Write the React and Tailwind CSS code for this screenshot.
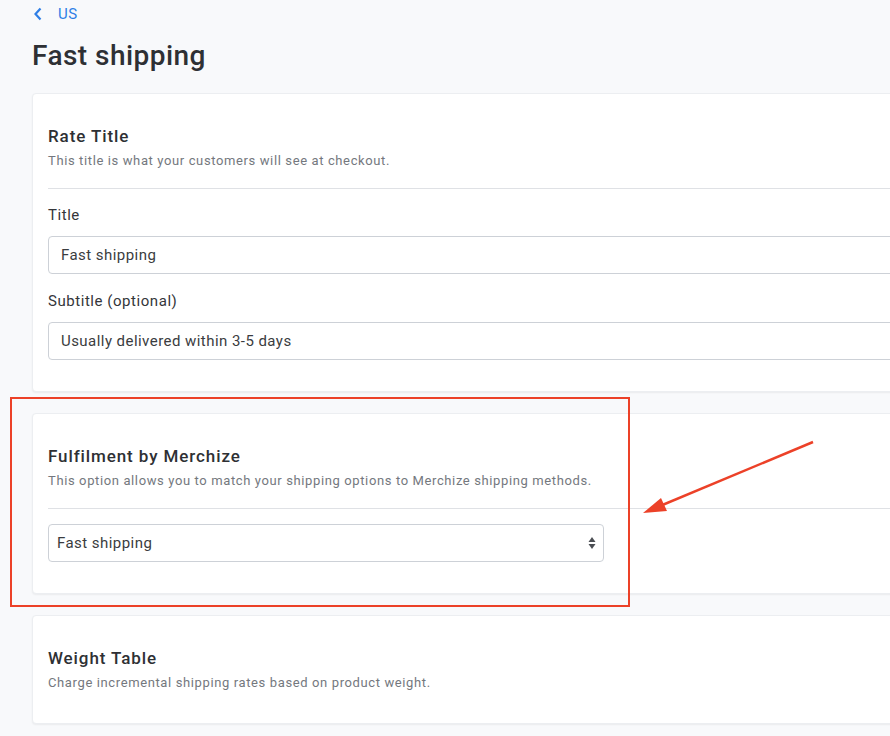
import React from 'react';

const Card = ({ title, description, children, divider = true }) => (
  <div className="w-[1000px] rounded bg-white border border-[#eceef1] shadow-[0_1px_2px_rgba(0,0,0,0.06)]">
    <div className="pl-[15px] pt-[30px]">
      <h2 className="text-[17px] leading-6 font-medium tracking-[0.9px] text-[#2e3034]">{title}</h2>
      <p className="mt-[3px] text-[13px] leading-5 tracking-[0.62px] text-[#74787e]">{description}</p>
    </div>
    {children ? (
      <>
        {divider && <div className="ml-[15px] mt-[17px] border-t border-[#dfe1e5]" />}
        <div className="pl-[15px] pt-[15px] pb-[31px]">{children}</div>
      </>
    ) : (
      <div className="pb-[30px]" />
    )}
  </div>
);

const TextField = ({ label, value }) => (
  <div>
    <label className="block text-[15px] leading-[22px] tracking-[0.55px] text-[#34363a]">{label}</label>
    <div className="mt-[10px] h-[38px] flex items-center pl-3 rounded border border-[#cdd1d7] bg-white text-[15px] tracking-[0.45px] text-[#3a3c40]">
      {value}
    </div>
  </div>
);

const App = () => {
  return (
    <div className="relative min-h-screen w-full overflow-hidden bg-[#f8f9fb] font-['Roboto',sans-serif]">
      <div className="pl-8 pt-[4px]">
        <a href="#" className="flex items-center h-5 text-[15px] tracking-[0.4px] text-[#2f7fe6]">
          <svg width="10" height="14" viewBox="0 0 10 14" className="ml-[1px]">
            <path d="M7.5 1.5 L2.5 7 L7.5 12.5" fill="none" stroke="#2f7fe6" strokeWidth="2.2" />
          </svg>
          <span className="ml-[15px]">US</span>
        </a>
        <h1 className="mt-[14px] text-[28px] leading-9 font-medium tracking-[0.46px] text-[#2e3034]">Fast shipping</h1>

        <div className="mt-[19px] flex flex-col gap-[21px]">
          <Card title="Rate Title" description="This title is what your customers will see at checkout.">
            <div className="flex flex-col gap-[16px]">
              <TextField label="Title" value="Fast shipping" />
              <TextField label="Subtitle (optional)" value="Usually delivered within 3-5 days" />
            </div>
          </Card>

          <Card
            title="Fulfilment by Merchize"
            description="This option allows you to match your shipping options to Merchize shipping methods."
          >
            <div className="w-[556px] h-[38px] flex items-center justify-between pl-2 pr-[7px] rounded border border-[#cdd1d7] bg-white text-[15px] tracking-[0.45px] text-[#3a3c40]">
              <span>Fast shipping</span>
              <svg width="8" height="14" viewBox="0 0 8 14">
                <path d="M4 1 L7.5 6 L0.5 6 Z" fill="#4b4e53" />
                <path d="M0.5 8 L7.5 8 L4 13 Z" fill="#4b4e53" />
              </svg>
            </div>
          </Card>

          <Card title="Weight Table" description="Charge incremental shipping rates based on product weight." />
        </div>
      </div>

      {/* highlight box around the fulfilment card */}
      <div className="absolute left-[10px] top-[397px] w-[620px] h-[210px] border-[2.5px] border-[#ec4128] pointer-events-none" />

      {/* callout arrow */}
      <svg className="absolute left-0 top-0 pointer-events-none" width="890" height="736">
        <line x1="813" y1="442" x2="660" y2="506" stroke="#ec4128" strokeWidth="2.5" />
        <path d="M643 513 L661 498 L667 511 Z" fill="#ec4128" />
      </svg>
    </div>
  );
};

export default App;
